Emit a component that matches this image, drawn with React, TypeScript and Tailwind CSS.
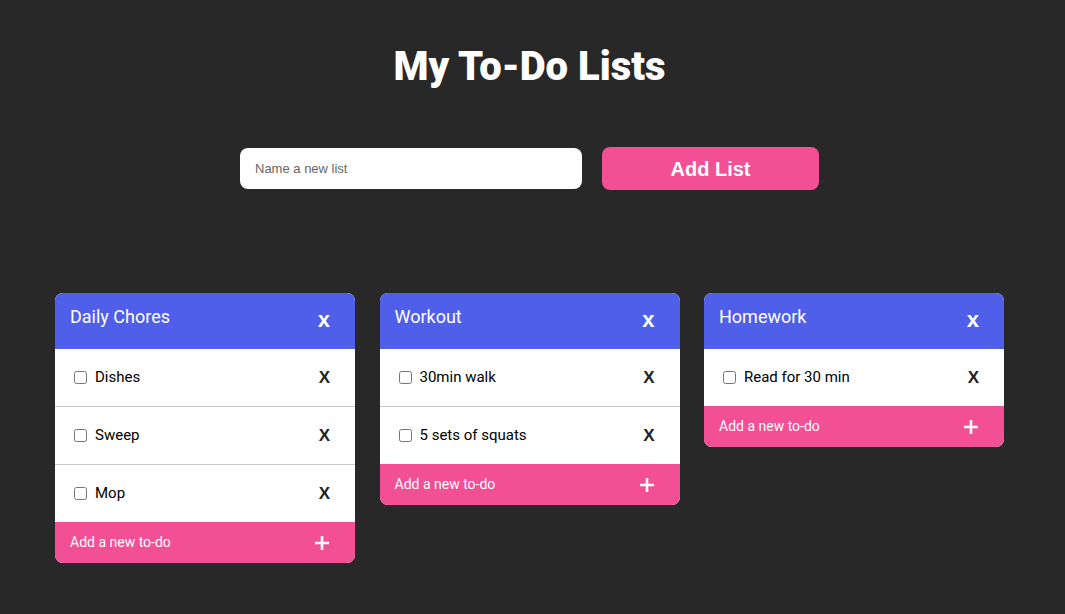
import { useState } from "react";

type Todo = { id: number; text: string; done: boolean };
type List = { id: number; name: string; todos: Todo[] };

const initialLists: List[] = [
  {
    id: 1,
    name: "Daily Chores",
    todos: [
      { id: 1, text: "Dishes", done: false },
      { id: 2, text: "Sweep", done: false },
      { id: 3, text: "Mop", done: false },
    ],
  },
  {
    id: 2,
    name: "Workout",
    todos: [
      { id: 1, text: "30min walk", done: false },
      { id: 2, text: "5 sets of squats", done: false },
    ],
  },
  {
    id: 3,
    name: "Homework",
    todos: [{ id: 1, text: "Read for 30 min", done: false }],
  },
];

function ListCard({ list }: { list: List }) {
  return (
    <div className="w-[300px] overflow-hidden rounded-lg bg-white">
      <div className="flex h-[56px] items-start justify-between bg-[#4f5fe9] pl-[15px] pr-[25px] text-white">
        <h2 className="pt-[13px] text-[18px] leading-[22px]">{list.name}</h2>
        <button className="pt-[15px] font-['Liberation_Sans',Arial,sans-serif] text-[22px] font-bold leading-[24px]">
          x
        </button>
      </div>
      {list.todos.map((todo) => (
        <div
          key={todo.id}
          className="flex h-[58px] items-center justify-between border-b border-[#c8c8c8] pl-[19px] pr-[25px]"
        >
          <label className="flex items-center gap-[8px] text-[15px] text-black">
            <input
              type="checkbox"
              defaultChecked={todo.done}
              className="h-[13px] w-[13px]"
            />
            {todo.text}
          </label>
          <button className="font-['Liberation_Sans',Arial,sans-serif] text-[17px] font-bold text-[#222]">
            X
          </button>
        </div>
      ))}
      <div className="-mt-px flex h-[41px] items-center justify-between bg-[#f24f94] pl-[15px] pr-[25px] text-white">
        <span className="text-[14px]">Add a new to-do</span>
        <svg width="16" height="16" viewBox="0 0 16 16">
          <path d="M8 1v14M1 8h14" stroke="white" strokeWidth="2.6" />
        </svg>
      </div>
    </div>
  );
}

export default function App() {
  const [lists] = useState(initialLists);

  return (
    <div className="min-h-[614px] bg-[#282828] font-['Roboto',sans-serif]">
      <h1 className="pr-[6px] pt-[42px] text-center text-[40px] font-black leading-[50px] text-white">
        My To-Do Lists
      </h1>
      <div className="mt-[56px] flex justify-center gap-[20px] pr-[6px]">
        <input
          placeholder="Name a new list"
          className="h-[41px] w-[342px] rounded-lg bg-white px-[15px] font-['Liberation_Sans',Arial,sans-serif] text-[13px] text-black outline-none placeholder:text-[#666]"
        />
        <button className="-mt-px h-[43px] w-[217px] rounded-lg bg-[#f24f94] font-['Liberation_Sans',Arial,sans-serif] text-[20px] font-bold text-white">
          Add List
        </button>
      </div>
      <div className="mt-[103px] flex items-start gap-[24.5px] pl-[55px]">
        {lists.map((list) => (
          <ListCard key={list.id} list={list} />
        ))}
      </div>
    </div>
  );
}
